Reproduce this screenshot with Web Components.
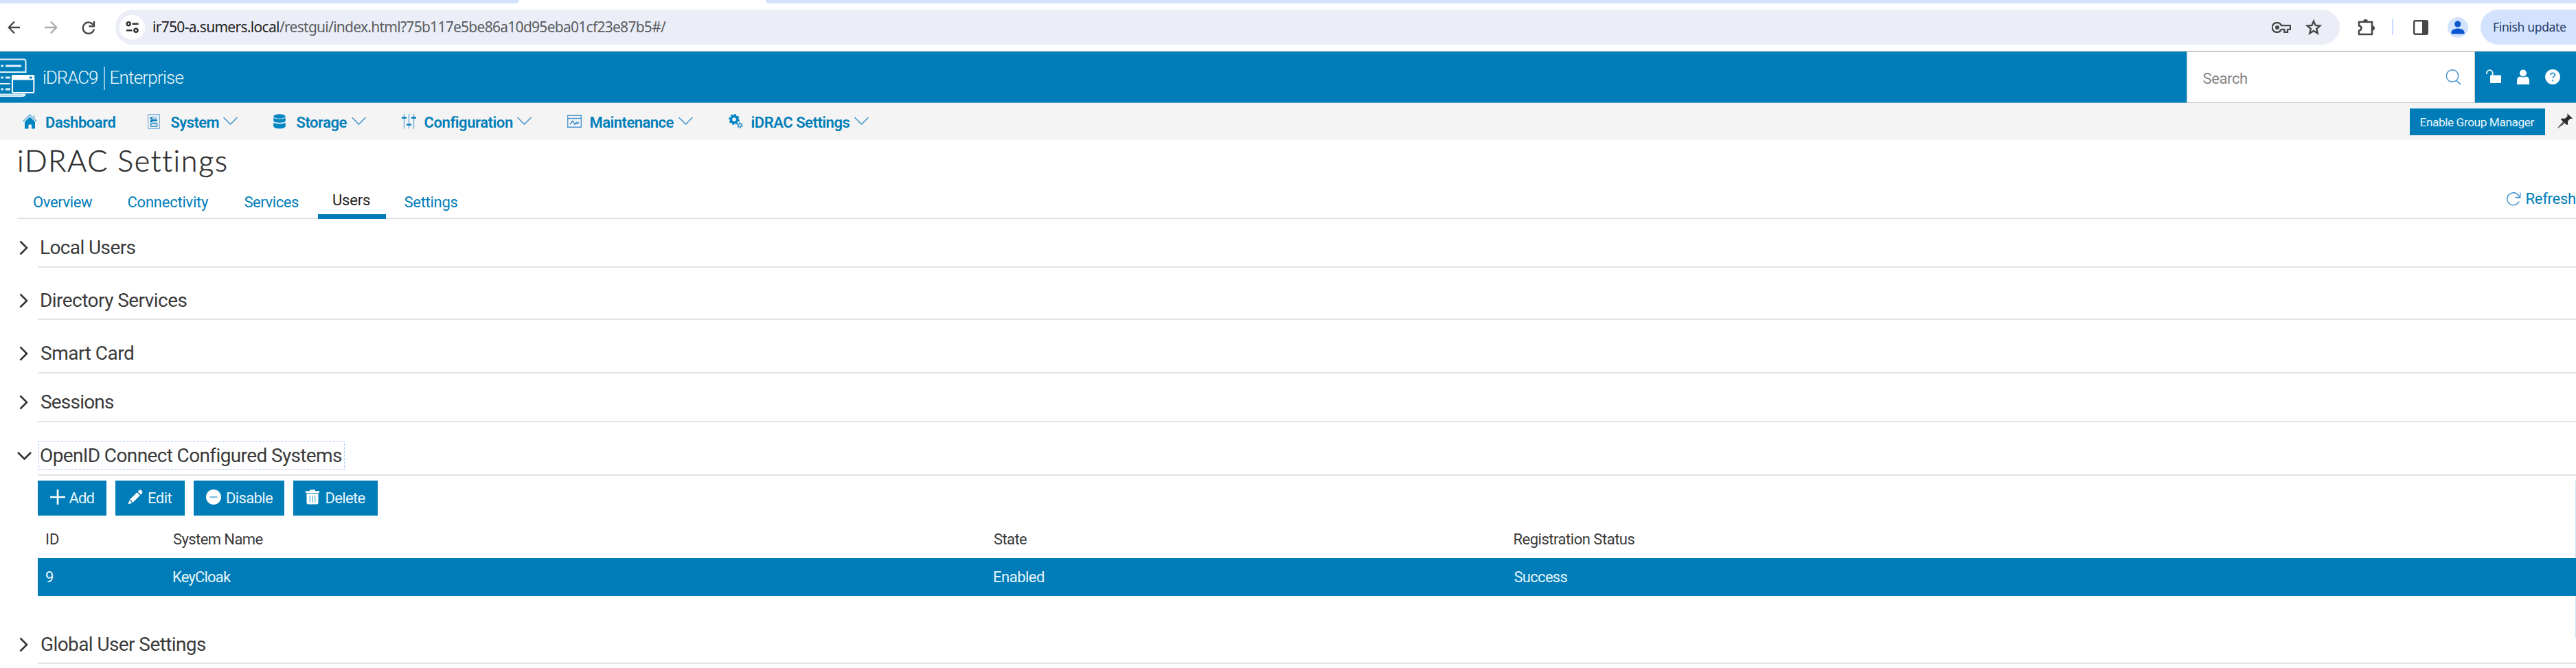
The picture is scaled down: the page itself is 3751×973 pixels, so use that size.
<!DOCTYPE html>
<html lang="en">
<head>
<meta charset="utf-8">
<title>iDRAC Settings</title>
<style>
html,body{margin:0;padding:0;background:#fff}
body{width:3751px;height:973px;overflow:hidden;font-family:Roboto,"Liberation Sans",sans-serif}
</style>
</head>
<body>
<idrac-page></idrac-page>
<script>
const ICONS = {
  back:[19,20,'<path d="M18 10H2M10 1.5 1.8 10l8.200 8.500" fill="none" stroke="#474747" stroke-width="2.400"/>'],
  forward:[19,20,'<path d="M0 10h17M9 1.500 17.200 10 9 18.500" fill="none" stroke="#ababab" stroke-width="2.400"/>'],
  reload:[20,20,'<path d="M16.800 6.200A8.200 8.200 0 1 0 18 12.500" fill="none" stroke="#474747" stroke-width="2.400"/><path d="M18 .8v7.500h-7.500" fill="none" stroke="#474747" stroke-width="2.400"/>'],
  tune:[20,17,'<g fill="none" stroke="#333" stroke-width="2.600"><circle cx="4.200" cy="3.800" r="2.500"/><path d="M9.500 3.800h9M1 13.200h8.500"/><circle cx="15" cy="13.200" r="2.500"/></g>'],
  key:[28,16,'<g fill="none" stroke="#474747" stroke-width="2.300"><path d="M14 5.200a7 7 0 1 0 0 5.600h4.300v4h4.700v-4h4V5.200z"/></g><circle cx="8" cy="8" r="3" fill="#474747"/>'],
  star:[24,23,'<path d="M12 2.800l2.600 6.100 6.700.6-5.100 4.400 1.600 6.600-5.800-3.500-5.800 3.500 1.600-6.600-5.100-4.400 6.700-.6z" fill="none" stroke="#474747" stroke-width="2.400"/>'],
  puzzle:[25,26,'<path d="M2 5h19v18H2v-5.500c2-.2 3.400-1.500 3.400-3.500S4 10.700 2 10.500z" fill="none" stroke="#474747" stroke-width="2.600" stroke-linejoin="round"/><path d="M8 4.500a3.500 3.500 0 0 1 7 0zM21.500 10.500a3.500 3.500 0 0 1 0 7z" fill="#474747"/>'],
  panel:[22,22,'<rect x="1.200" y="1.200" width="19.600" height="19.600" rx="1.800" fill="none" stroke="#474747" stroke-width="2.400"/><path d="M13 1h8v20h-8z" fill="#474747"/>'],
  avatar:[30,30,'<circle cx="15" cy="15" r="15" fill="#d3e3fd"/><circle cx="14.700" cy="10" r="4.600" fill="#0b57d0"/><path d="M5.500 24.500v-2.500c0-4 6-5.600 9.500-5.600s9.500 1.600 9.500 5.600v2.500z" fill="#0b57d0"/>'],
  logo:[51,60,'<g fill="none" stroke="#e6f4fb" stroke-width="2"><path d="M0 2.500h34.500a3 3 0 0 1 3 3V21H0M0 38h15M0 56h33.500l3.500-1.500M0 53.500h37"/><path d="M8 12h23M1.500 12h3.500M1.500 29h3.500M8 29h7M1.500 46h3.500M8 46h7" stroke-width="3"/></g><rect x="18" y="26" width="31.300" height="25" rx="1.500" fill="#007db8" stroke="#fff" stroke-width="2"/><path d="M18 25h31.500v7.500H18z" fill="#fff"/><path d="M43 27.500h3.500v3H43z" fill="#007db8"/>'],
  search:[23,23,'<circle cx="10" cy="9.500" r="8.700" fill="none" stroke="#3a8fd0" stroke-width="1.400"/><path d="M15.500 16l6.300 5.800" stroke="#3a8fd0" stroke-width="1.600"/>'],
  unlock:[22,21,'<path d="M1 7V5.500a4.300 4.300 0 0 1 8.600 0V9" fill="none" stroke="#fff" stroke-width="1.700"/><rect x="6" y="8.500" width="16" height="11.500" rx="1" fill="#fff"/>'],
  person:[18,22,'<circle cx="9" cy="5.500" r="5" fill="#fff"/><path d="M0 22v-5.500C0 12.500 2.500 10.500 5 10.500c2 1.300 6 1.300 8 0 2.500 0 5 2 5 6V22z" fill="#fff"/>'],
  help:[22,22,'<circle cx="11" cy="11" r="10.900" fill="#fff"/><path d="M8 8.200c0-3.700 6.300-3.800 6.300-.3 0 2.300-3.100 2.600-3.100 5.100M11.200 15v2.200" fill="none" stroke="#2c93c8" stroke-width="1.800"/>'],
  home:[21,22,'<path d="M.5 11 10.500 1l10 10M16.500 2v4" fill="none" stroke="#4a9fd2" stroke-width="1.200"/><path d="M3 11.200 10.500 4l7.500 7.200V21.500h-5v-6H8.500v6H3z" fill="#0085c3"/>'],
  server:[18,22,'<rect x=".7" y=".7" width="16.600" height="20.600" fill="none" stroke="#5a9ed6"/><rect x="4" y="3.500" width="10" height="15.500" fill="#b5d2ec"/><path d="M3.500 6h3.500M3.500 11h3.500M4.500 9h9.500" stroke="#007db8" stroke-width="2"/><rect x="4.700" y="14" width="9" height="4" fill="#f4f4f4" stroke="#1583c4" stroke-width="1.300"/>'],
  disks:[18,22,'<g fill="#0085c3"><ellipse cx="9" cy="3.500" rx="8.700" ry="3.200"/><path d="M.3 5.500c3.500 2.600 13.900 2.600 17.400 0v5c-2.500 3-14.900 3-17.400 0zM.3 12.500c3.500 2.600 13.900 2.600 17.400 0v6c-2.500 3.800-14.900 3.800-17.400 0z"/></g>'],
  sliders:[21,22,'<path d="M3.500 0v21.500M10.500 0v21.500M17.500 0v21.500" stroke="#5fa3d8" stroke-width="1.300"/><path d="M0 5.500h7M7 15.500h7M14 5.500h7" stroke="#007db8" stroke-width="2.500"/>'],
  monitor:[21,20,'<path d="M.7 1.200h19.600v17H.7zM.7 5.500h19.600" fill="none" stroke="#4e99d3" stroke-width="1.400"/><path d="M4 14l4-5 3 5.500 2-3.500 1.800 2.500L17 10.500" fill="none" stroke="#2e88c8" stroke-width="1.300"/>'],
  gears:[21,22,'<circle cx="8" cy="8" r="4.600" fill="none" stroke="#0085c3" stroke-width="3.600"/><circle cx="8" cy="8" r="6.900" fill="none" stroke="#0085c3" stroke-width="2" stroke-dasharray="2.800 2.620"/><circle cx="16.500" cy="16.500" r="2.300" fill="none" stroke="#2e95cc" stroke-width="1.400"/><circle cx="16.500" cy="16.500" r="3.700" fill="none" stroke="#2e95cc" stroke-width="1.600" stroke-dasharray="1.800 2.070"/>'],
  down:[21,12,'<path d="M.5 1 10.500 11 20.500 1" fill="none" stroke="#3a8ecb" stroke-width="1.400"/>'],
  pin:[23,22,'<path d="M.5 21.500 8 12.500l2 2z" fill="#555" stroke="#555"/><path d="M14.500.5l7.500 7-2 .5-1-.5-4 4v5l-1.500.5-8.500-8 1-1.500 5 .3 4-4-.8-1.300z" fill="#2b2b2b"/>'],
  refresh:[21,20,'<path d="M18 13.500A9 9 0 1 1 17.500 5l1.800 2.500" fill="none" stroke="#3a8ecb" stroke-width="1.400"/><path d="M19.700.5v7.200h-7.200" fill="none" stroke="#3a8ecb" stroke-width="1.400"/>'],
  right:[14,22,'<path d="M1.500 1.500 11 11 1.500 20.500" fill="none" stroke="#333" stroke-width="2.600"/>'],
  open:[21,12,'<path d="M1 1 10.500 10.500 20 1" fill="none" stroke="#333" stroke-width="2.600"/>'],
  plus:[22,22,'<path d="M11 0v22M0 11h22" stroke="#fff" stroke-width="2.600"/>'],
  pencil:[22,22,'<path d="M.5 21.500 2.500 15.500l4 4zM3.300 14.300 13.500 4.200l4.400 4.300L7.700 18.700zM14.700 3l2-2c2-1.800 6 2 4.300 4.200l-2 2.200z" fill="#fff"/>'],
  minus:[22,22,'<circle cx="11" cy="11" r="11" fill="#fff"/><path d="M5.500 11h11" stroke="#7fbfe0" stroke-width="2.400"/>'],
  trash:[20,22,'<path d="M0 2.200h6V.3h8v1.900h6v3H0zM1.500 6h17v13.500a2 2 0 0 1-2 2h-13a2 2 0 0 1-2-2z" fill="#fff"/><path d="M6.300 9v9.500M10 9v9.500M13.700 9v9.500" stroke="#5fb0da" stroke-width="1.300"/>']
};

class UiIcon extends HTMLElement{
  constructor(){
    super();
    const [w,h,body]=ICONS[this.getAttribute('name')];
    this.attachShadow({mode:'open'}).innerHTML=
      `<style>:host{display:block;flex:none;width:${w}px;height:${h}px}svg{display:block}</style><svg width="${w}" height="${h}" viewBox="0 0 ${w} ${h}">${body}</svg>`;
  }
}

// A single line of text whose box is exactly its ink width; tracking absorbs the difference.
const pen=document.createElement('canvas').getContext('2d');
class FitLabel extends HTMLElement{
  connectedCallback(){
    if(this.shadowRoot)return;
    const w=+this.getAttribute('w');
    this.attachShadow({mode:'open'}).innerHTML=
      `<style>:host{display:block;flex:none;width:${w}px;white-space:pre;line-height:1.2}span{display:inline-block}</style><span><slot></slot></span>`;
    const cs=getComputedStyle(this), text=this.textContent;
    pen.font=`${cs.fontWeight} ${cs.fontSize} ${cs.fontFamily}`;
    const m=pen.measureText(text);
    const ink=m.actualBoundingBoxLeft+m.actualBoundingBoxRight;
    const span=this.shadowRoot.querySelector('span');
    span.style.marginLeft=m.actualBoundingBoxLeft+'px';
    if(text.length>1)span.style.letterSpacing=((w-ink)/(text.length-1)).toFixed(3)+'px';
  }
}

function define(name,css,html){
  customElements.define(name,class extends HTMLElement{
    connectedCallback(){
      if(this.shadowRoot)return;
      this.attachShadow({mode:'open'}).innerHTML=`<style>*{box-sizing:border-box}${css}</style>`+(typeof html==='function'?html(this):html);
    }
  });
}
customElements.define('ui-icon',UiIcon);
customElements.define('fit-label',FitLabel);

define('browser-bar',`
:host{display:block;height:75px;background:#fff;font-family:"Noto Sans","Open Sans",sans-serif}
.tabs{display:flex;height:5px;justify-content:space-between}
.a{width:756px;background:#d3e3fd;border-bottom-right-radius:5px}
.b{width:2636px;background:#d3e3fd;border-bottom-left-radius:5px}
.bar{display:flex;align-items:center;height:69px;padding:0 0 0 11px}
.omni{display:flex;align-items:center;width:3239px;height:51px;border-radius:26px;background:#ebeef7;margin-left:29px;padding-left:6px}
.site{width:37px;height:36px;border-radius:50%;background:#fff;display:flex;align-items:center;justify-content:center;margin-right:12px}
.host{font-size:21px;color:#222}.path{font-size:21px;color:#5a5c60}
.sep{width:2px;height:23px;background:#c9dcfb;margin:0 29px 0 25px}
.pill{width:139px;height:51px;border-radius:26px 0 0 26px;background:#d3e3fd;margin-left:18px;display:flex;align-items:center;padding-left:19px;color:#27406b;font-size:17.5px}
.edge{height:1px;background:#c7c9cb}
`,`<div class="tabs"><div class="a"></div><div class="b"></div></div>
<div class="bar"><ui-icon name="back"></ui-icon><ui-icon name="forward" style="margin-left:35px"></ui-icon><ui-icon name="reload" style="margin-left:35px"></ui-icon>
<div class="omni"><div class="site"><ui-icon name="tune"></ui-icon></div><fit-label class="host" w="183">ir750-a.sumers.local</fit-label><fit-label class="path" w="563" style="margin-left:1px">/restgui/index.html?75b117e5be86a10d95eba01cf23e87b5#/</fit-label>
<ui-icon name="key" style="margin-left:2338px"></ui-icon><ui-icon name="star" style="margin-left:21px"></ui-icon></div>
<ui-icon name="puzzle" style="margin-left:26px"></ui-icon><div class="sep"></div><ui-icon name="panel"></ui-icon><ui-icon name="avatar" style="margin-left:28px"></ui-icon>
<div class="pill"><fit-label w="105">Finish update</fit-label></div></div><div class="edge"></div>`);

define('masthead-bar',`
:host{display:flex;align-items:center;height:75px;box-sizing:border-box;background:#007db8;color:#eef8fc;border-top:1px solid #2b91c4;border-bottom:1px solid #55a7cf}
.name{font-size:26px;font-weight:300;margin-top:3px}
.sep{width:1.500px;height:34px;background:#8cc6e2;margin:3px 9px 0}
.box{display:flex;align-items:center;width:420px;height:75px;background:#fff;border:1.500px solid #c8c8c8;margin-left:2916px;padding:0 19px 0 23px;justify-content:space-between;color:#858585;font-size:22px}
`,`<ui-icon name="logo" style="margin-top:2px"></ui-icon><fit-label class="name" w="79" style="margin-left:12px">iDRAC9</fit-label><div class="sep"></div><fit-label class="name" w="106">Enterprise</fit-label>
<div class="box"><fit-label w="64.500" style="margin-top:5px">Search</fit-label><ui-icon name="search"></ui-icon></div>
<ui-icon name="unlock" style="margin:-2px 0 0 16px"></ui-icon><ui-icon name="person" style="margin:-2px 0 0 23px"></ui-icon><ui-icon name="help" style="margin:-2px 0 0 23.500px"></ui-icon>`);

define('nav-item',`
:host{display:flex;align-items:center;font-size:22px;font-weight:600;color:#007db8}
.i{width:34px;display:flex}.c{margin:-1px 0 0 6px}fit-label{margin-top:5px}
`,e=>`<div class="i"><ui-icon name="${e.getAttribute('icon')}"></ui-icon></div><fit-label w="${e.getAttribute('w')}">${e.getAttribute('label')}</fit-label>${e.hasAttribute('plain')?'':'<ui-icon class="c" name="down"></ui-icon>'}`);

define('nav-bar',`
:host{display:flex;align-items:center;height:54px;background:#f4f4f4;padding-left:33px}
nav{display:flex;gap:52px;align-items:center}
.btn{width:197px;height:39px;background:#007db8;color:#e8f5fb;font-size:17.200px;display:flex;align-items:center;padding:2px 0 0 16px;margin-left:auto}
`,`<nav><nav-item icon="home" label="Dashboard" w="101.500" plain style="margin-right:-6px"></nav-item>
<nav-item icon="server" label="System" w="70"></nav-item><nav-item icon="disks" label="Storage" w="74"></nav-item>
<nav-item icon="sliders" label="Configuration" w="128"></nav-item><nav-item icon="monitor" label="Maintenance" w="122"></nav-item>
<nav-item icon="gears" label="iDRAC Settings" w="143"></nav-item></nav>
<div class="btn"><fit-label w="166">Enable Group Manager</fit-label></div><ui-icon name="pin" style="margin:-3px 4px 0 18.500px"></ui-icon>`);

define('page-tabs',`
:host{display:flex;box-sizing:border-box;height:57px;margin-left:25px;border-bottom:2px solid #e2e2e2;font-size:22px;color:#007db8;padding-left:24px}
div{display:flex;align-items:center;height:55px;padding-top:11px}
.on{width:99px;height:57px;border-bottom:7.500px solid #007db8;padding:10px 0 0 22.500px;color:#222;margin:0 27px 0 27.500px}
.r{margin-left:auto}
`,`<div><fit-label w="86">Overview</fit-label></div><div style="margin-left:51.500px"><fit-label w="117.500">Connectivity</fit-label></div><div style="margin-left:51.500px"><fit-label w="79.500">Services</fit-label></div>
<div class="on"><fit-label w="54">Users</fit-label></div><div><fit-label w="78">Settings</fit-label></div>
<div class="r" style="padding-top:1px"><ui-icon name="refresh" style="margin-top:-1px"></ui-icon><fit-label w="71.500" style="margin-left:8px">Refresh</fit-label><span style="width:1px"></span></div>`);

define('accordion-section',`
:host{display:block;margin-left:25px;color:#3a3a3a}
.h{display:flex;align-items:center;font-size:28px}
.rule{height:2px;background:#e3e3e3;margin-left:29.500px}
.ar{width:31px;display:flex}
.t{padding:0 5px 0 3px;height:41px;display:flex;align-items:center;border:1.500px solid transparent}
.focus{border:1.500px dotted #9dc1f2;padding:0 4px 0 2px}
ui-icon[name=right]{margin-left:3px}
`,e=>{const o=e.hasAttribute('open');return `<div class="h" style="height:${e.getAttribute('h')}px;padding-top:${e.getAttribute('pt')}px;padding-bottom:${e.getAttribute('pb')||0}px"><div class="ar"><ui-icon name="${o?'open':'right'}"></ui-icon></div><div class="t ${o?'focus':''}"><fit-label w="${e.getAttribute('w')}">${e.getAttribute('label')}</fit-label></div></div><div class="rule"></div><slot></slot>`});

define('action-button',`
:host{display:flex;align-items:center;box-sizing:border-box;height:51px;background:#007db8;color:#e8f5fb;font-size:22px;padding-left:18px}
fit-label{margin-top:2px}ui-icon{margin-top:-3px}
`,e=>`<ui-icon name="${e.getAttribute('icon')}"></ui-icon><fit-label w="${e.getAttribute('w')}" style="margin-left:${e.getAttribute('gap')}px">${e.getAttribute('label')}</fit-label>`);

define('systems-table',`
:host{display:block;margin-left:29.500px;font-size:22px;color:#3a3a3a;border-right:1px solid #cbe4f1}
.actions{display:flex;gap:13px;height:54px}
.row{display:grid;grid-template-columns:185px 1195px 757.500px 1fr;padding-left:12.500px;align-items:center}
.head{height:59px;padding-top:5px}
.sel{height:55px;background:#007db8;color:#e8f5fb;margin-right:-1px;padding-top:1px}
.foot{height:61px}
`,`<div class="actions"><action-button icon="plus" label="Add" w="36" gap="6" style="width:100.500px"></action-button><action-button icon="pencil" label="Edit" w="34.500" gap="8" style="width:101px"></action-button><action-button icon="minus" label="Disable" w="67" gap="8" style="width:132px"></action-button><action-button icon="trash" label="Delete" w="57" gap="9.500" style="width:123px"></action-button></div>
<div class="row head"><fit-label w="19">ID</fit-label><fit-label w="130.500">System Name</fit-label><fit-label w="48">State</fit-label><fit-label w="176">Registration Status</fit-label></div>
<div class="row sel"><fit-label w="11">9</fit-label><fit-label w="85">KeyCloak</fit-label><fit-label w="73">Enabled</fit-label><fit-label w="78">Success</fit-label></div><div class="foot"></div>`);

define('idrac-page',`
:host{display:block;width:3751px;height:973px;background:#fff;overflow:hidden}
.title{height:58px;padding:2px 0 0 27px;display:flex;align-items:center;font:300 43px Lato,"Open Sans",sans-serif;color:#2c2c2c;-webkit-text-stroke:.5px #2c2c2c}
`,`<browser-bar></browser-bar><masthead-bar></masthead-bar><nav-bar></nav-bar>
<div class="title"><fit-label w="302">iDRAC Settings</fit-label></div>
<page-tabs></page-tabs>
<accordion-section label="Local Users" w="137.500" h="69" pt="15"></accordion-section>
<accordion-section label="Directory Services" w="212.500" h="74" pt="22"></accordion-section>
<accordion-section label="Smart Card" w="134" h="76" pt="21"></accordion-section>
<accordion-section label="Sessions" w="106" h="69" pt="15"></accordion-section>
<accordion-section label="OpenID Connect Configured Systems" w="438" h="76" pt="21" open><systems-table style="margin-top:7px"></systems-table></accordion-section>
<accordion-section label="Global User Settings" w="240" h="36" pt="0" pb="16"></accordion-section>`);
</script>
</body>
</html>
